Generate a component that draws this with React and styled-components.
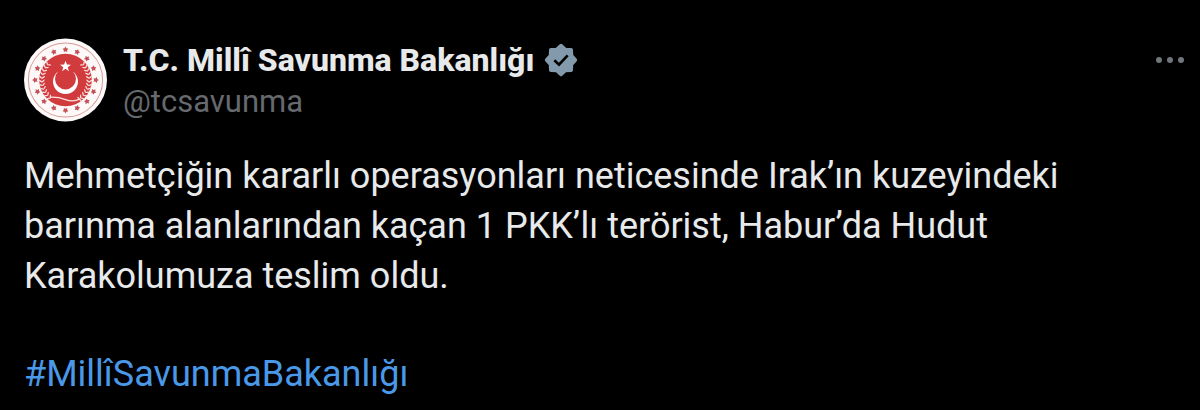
import React from "react";
import styled, { createGlobalStyle } from "styled-components";

const GlobalStyle = createGlobalStyle`
  body {
    margin: 0;
    background: #000;
    color: #e7e9ea;
    font-family: Roboto, sans-serif;
  }
`;

const Post = styled.article`
  padding: 38px 12px 10px 24px;
`;

const Header = styled.header`
  display: flex;
  align-items: flex-start;
  gap: 16px;
`;

const AvatarImage = styled.svg`
  flex: none;
  width: 83px;
  height: 84px;
`;

const Author = styled.div`
  flex: 1;
  min-width: 0;
`;

const NameRow = styled.div`
  display: flex;
  align-items: center;
  gap: 10px;
  height: 44px;
`;

const Name = styled.a`
  color: inherit;
  font-size: 32px;
  font-weight: 800;
  line-height: 44px;
  text-decoration: none;
`;

const Handle = styled.a`
  display: block;
  color: #66696d;
  font-size: 31px;
  line-height: 40px;
  text-decoration: none;
`;

const BadgeIcon = styled.svg`
  flex: none;
  width: 34px;
  height: 34px;
`;

const MoreButton = styled.button`
  display: flex;
  padding: 4px 0;
  border: 0;
  background: none;
  color: #71767b;
  cursor: pointer;

  svg {
    width: 36px;
    height: 36px;
  }
`;

const Body = styled.div`
  margin-top: 29px;
  font-size: 36px;
  line-height: 50px;
`;

const Paragraph = styled.p`
  max-width: 1100px;
  margin: 0 0 48px;
`;

const Hashtag = styled.a`
  color: #4a99e9;
  text-decoration: none;
`;

// points of a star with its first tip pointing up
function starPoints(cx, cy, tips, outer, inner) {
  const points = [];
  for (let i = 0; i < tips * 2; i++) {
    const radius = i % 2 ? inner : outer;
    const angle = (Math.PI * i) / tips - Math.PI / 2;
    points.push(`${(cx + radius * Math.cos(angle)).toFixed(1)},${(cy + radius * Math.sin(angle)).toFixed(1)}`);
  }
  return points.join(" ");
}

const ringStars = Array.from({ length: 16 }, (_, i) => (i * 360) / 16);
const leaves = Array.from({ length: 11 }, (_, i) => 130 + i * 9);

function Laurel() {
  return (
    <g fill="#fbe3df">
      {leaves.map((angle) => (
        <g key={angle} transform={`rotate(${angle}) translate(70 0)`}>
          <ellipse cx="5" cy="0" rx="6" ry="2" transform="rotate(38)" />
          <ellipse cx="-5" cy="0" rx="6" ry="2" transform="rotate(-38)" />
        </g>
      ))}
    </g>
  );
}

function Avatar() {
  return (
    <AvatarImage viewBox="-123 -123 246 246" role="img" aria-label="T.C. Millî Savunma Bakanlığı">
      <circle r="123" fill="#fdf9f8" />
      <circle r="110" fill="none" stroke="#d99a96" strokeWidth="3" />
      {ringStars.map((angle) => (
        <polygon key={angle} points={starPoints(0, -90, 5, 9, 5)} fill="#c25258" transform={`rotate(${angle})`} />
      ))}
      <circle r="78" fill="#d23b3d" />
      <Laurel />
      <g transform="scale(-1 1)">
        <Laurel />
      </g>
      <path d="M-22 -25A37 37 0 1 0 22 -25A31 31 0 1 1 -22 -25Z" fill="#fff" />
      <polygon points={starPoints(0, -40, 5, 17, 7)} fill="#fff" />
      <path d="M-44 51Q-22 50 0 58T42 57M37 52L48 64" fill="none" stroke="#fbe3df" strokeWidth="4" strokeLinecap="round" />
    </AvatarImage>
  );
}

function VerifiedBadge() {
  return (
    <BadgeIcon viewBox="0 0 102 102" role="img" aria-label="Verified account">
      <polygon
        points={starPoints(51, 51, 8, 43, 34)}
        fill="#829aab"
        stroke="#829aab"
        strokeWidth="11"
        strokeLinejoin="round"
      />
      <path d="M31 52L45 65L71 37" fill="none" stroke="#000" strokeWidth="8" />
    </BadgeIcon>
  );
}

function App() {
  return (
    <>
      <GlobalStyle />
      <Post>
        <Header>
          <Avatar />
          <Author>
            <NameRow>
              <Name href="#profile">T.C. Millî Savunma Bakanlığı</Name>
              <VerifiedBadge />
            </NameRow>
            <Handle href="#profile">@tcsavunma</Handle>
          </Author>
          <MoreButton type="button" aria-label="More">
            <svg viewBox="0 0 36 36" fill="currentColor">
              <circle cx="7" cy="18" r="3" />
              <circle cx="18" cy="18" r="3" />
              <circle cx="29" cy="18" r="3" />
            </svg>
          </MoreButton>
        </Header>
        <Body>
          <Paragraph>
            Mehmetçiğin kararlı operasyonları neticesinde Irak’ın kuzeyindeki barınma alanlarından kaçan 1 PKK’lı
            terörist, Habur’da Hudut Karakolumuza teslim oldu.
          </Paragraph>
          <Hashtag href="#hashtag">#MillîSavunmaBakanlığı</Hashtag>
        </Body>
      </Post>
    </>
  );
}

export default App;
